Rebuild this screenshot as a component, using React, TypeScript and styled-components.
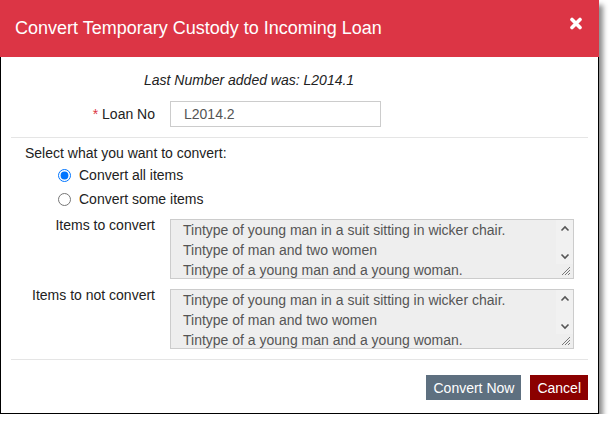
import styled, { createGlobalStyle } from 'styled-components';

const GlobalStyle = createGlobalStyle`
  html, body {
    margin: 0;
    padding: 0;
    background: #ffffff;
  }
  body {
    font-family: "Liberation Sans", Arial, sans-serif;
    font-size: 14px;
    color: #333333;
  }
`;

const itemLines = [
  'Tintype of young man in a suit sitting in wicker chair.',
  'Tintype of man and two women',
  'Tintype of a young man and a young woman.',
];

function CloseIcon() {
  return (
    <svg width="12" height="13" viewBox="0 0 12 13">
      <path d="M2 2.5 L10 10.5 M10 2.5 L2 10.5" stroke="#fff" strokeWidth="3.6" strokeLinecap="round" />
    </svg>
  );
}

function ItemsBox({ lines }: { lines: string[] }) {
  return (
    <Box>
      <BoxText>
        {lines.map((line, i) => (
          <BoxLine key={i}>{line}</BoxLine>
        ))}
      </BoxText>
      <Gutter>
        <svg width="10" height="7" viewBox="0 0 10 7">
          <path d="M1.5 5.5 L5 2 L8.5 5.5" fill="none" stroke="#555" strokeWidth="1.6" />
        </svg>
        <svg width="10" height="7" viewBox="0 0 10 7">
          <path d="M1.5 1.5 L5 5 L8.5 1.5" fill="none" stroke="#555" strokeWidth="1.6" />
        </svg>
      </Gutter>
      <Grip width="12" height="12" viewBox="0 0 12 12">
        <path d="M11 3 L3 11 M11 6 L6 11 M11 9 L9 11" stroke="#777" strokeWidth="1" />
      </Grip>
    </Box>
  );
}

export default function App() {
  return (
    <>
      <GlobalStyle />
      <Dialog>
        <Header>
          <Title>Convert Temporary Custody to Incoming Loan</Title>
          <CloseButton aria-label="Close">
            <CloseIcon />
          </CloseButton>
        </Header>
        <Body>
          <InfoLine>Last Number added was: L2014.1</InfoLine>
          <FieldRow>
            <FieldLabel>
              <Required>*</Required> Loan No
            </FieldLabel>
            <TextInput defaultValue="L2014.2" />
          </FieldRow>
        </Body>
        <Divider />
        <Section>
          <SectionTitle>Select what you want to convert:</SectionTitle>
          <RadioList>
            <RadioRow>
              <Radio type="radio" name="convert" defaultChecked />
              Convert all items
            </RadioRow>
            <RadioRow>
              <Radio type="radio" name="convert" />
              Convert some items
            </RadioRow>
          </RadioList>
          <BoxRow>
            <BoxLabel>Items to convert</BoxLabel>
            <ItemsBox lines={itemLines} />
          </BoxRow>
          <BoxRow>
            <BoxLabel>Items to not convert</BoxLabel>
            <ItemsBox lines={itemLines} />
          </BoxRow>
        </Section>
        <Divider />
        <Footer>
          <Button $tone="slate">Convert Now</Button>
          <Button $tone="maroon">Cancel</Button>
        </Footer>
      </Dialog>
    </>
  );
}

const Dialog = styled.div`
  width: 599px;
  height: 414px;
  box-sizing: border-box;
  border: 1px solid #000;
  border-top: none;
  background: #fff;
  box-shadow: 4px 5px 5px rgba(0, 0, 0, 0.45);
  display: flex;
  flex-direction: column;
`;

const Header = styled.div`
  height: 57px;
  margin: 0 -1px;
  background: #dc3545;
  display: flex;
  align-items: center;
  justify-content: space-between;
  padding: 0 17px 0 15px;
  box-sizing: border-box;
`;

const Title = styled.h1`
  margin: 0;
  font-size: 18px;
  font-weight: normal;
  color: #fff;
`;

const CloseButton = styled.button`
  border: none;
  background: transparent;
  padding: 0;
  display: flex;
  margin-top: -10px;
  cursor: pointer;
`;

const Body = styled.div`
  padding: 13px 0 10px;
`;

const InfoLine = styled.div`
  font-style: italic;
  line-height: 20px;
  padding-left: 143px;
  color: #222;
`;

const FieldRow = styled.div`
  display: grid;
  grid-template-columns: 154px 1fr;
  column-gap: 15px;
  align-items: center;
  margin-top: 11px;
`;

const FieldLabel = styled.label`
  text-align: right;
  color: #222;
`;

const Required = styled.span`
  color: #dc3545;
`;

const TextInput = styled.input`
  width: 211px;
  height: 26px;
  box-sizing: border-box;
  border: 1px solid #ccc;
  padding: 0 13px;
  font-family: inherit;
  font-size: 14px;
  color: #555;
  outline: none;
`;

const Divider = styled.hr`
  margin: 0 10px;
  border: none;
  border-top: 1px solid #e5e5e5;
  height: 0;
`;

const Section = styled.div`
  padding: 5px 0 10px;
  display: flex;
  flex-direction: column;
`;

const SectionTitle = styled.div`
  padding-left: 24px;
  line-height: 20px;
  color: #222;
`;

const RadioList = styled.div`
  display: flex;
  flex-direction: column;
  padding-left: 57px;
`;

const RadioRow = styled.label`
  display: flex;
  align-items: center;
  gap: 8px;
  height: 24px;
  color: #222;
`;

const Radio = styled.input`
  width: 13px;
  height: 13px;
  margin: 0;
`;

const BoxRow = styled.div`
  display: grid;
  grid-template-columns: 154px 404px;
  column-gap: 15px;
  margin-top: 8px;

  & + & {
    margin-top: 10px;
  }
`;

const BoxLabel = styled.div`
  text-align: right;
  line-height: 14px;
  margin-top: -1px;
  color: #222;
`;

const Box = styled.div`
  position: relative;
  height: 60px;
  box-sizing: border-box;
  border: 1px solid #ccc;
  background: #eeeeee;
  display: flex;
  overflow: hidden;
`;

const BoxText = styled.div`
  flex: 1;
  padding: 0 12px 0 12px;
  color: #555;
  line-height: 20px;
`;

const BoxLine = styled.div`
  white-space: nowrap;
`;

const Gutter = styled.div`
  width: 17px;
  height: 44px;
  background: #f1f1f1;
  display: flex;
  flex-direction: column;
  align-items: center;
  justify-content: space-between;
  padding: 5px 0 4px;
  box-sizing: border-box;
`;

const Grip = styled.svg`
  position: absolute;
  right: 2px;
  bottom: 2px;
`;

const Footer = styled.div`
  display: flex;
  justify-content: flex-end;
  gap: 9px;
  padding: 15px 10px 0;
`;

const Button = styled.button<{ $tone: 'slate' | 'maroon' }>`
  height: 25px;
  border: none;
  padding: 0 7px;
  font-family: inherit;
  font-size: 14px;
  color: #fff;
  background: ${(p) => (p.$tone === 'slate' ? '#5e7080' : '#8b0000')};
  cursor: pointer;
`;
